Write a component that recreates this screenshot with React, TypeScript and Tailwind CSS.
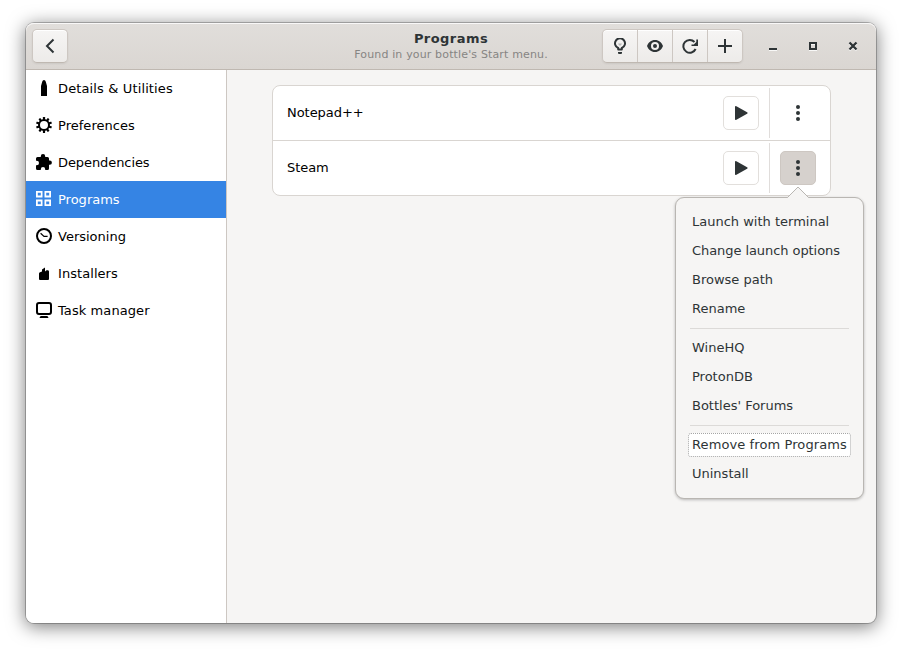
import type { ReactNode } from 'react';

function Icon({ children, className = '' }: { children: ReactNode; className?: string }) {
  return (
    <svg width="16" height="16" viewBox="0 0 16 16" fill="currentColor" className={`block shrink-0 ${className}`}>
      {children}
    </svg>
  );
}

const GEAR_ANGLES = [0, 36, 72, 108, 144, 180, 216, 252, 288, 324];

const NAV: { label: string; icon: ReactNode; tracking: string; active?: boolean }[] = [
  {
    label: 'Details & Utilities',
    tracking: 'tracking-[0.13px]',
    icon: <path d="M5 16V6l1.200-4.200Q6.600 0 8 0t1.800 1.800L11 6v10z" />,
  },
  {
    label: 'Preferences',
    tracking: 'tracking-[0.03px]',
    icon: (
      <>
        <circle cx="8" cy="8" r="5" fill="none" stroke="currentColor" strokeWidth="2" />
        {GEAR_ANGLES.map((a) => (
          <rect key={a} x="6.900" y="0" width="2.200" height="3" rx=".5" transform={`rotate(${a} 8 8)`} />
        ))}
      </>
    ),
  },
  {
    label: 'Dependencies',
    tracking: 'tracking-[-0.08px]',
    icon: (
      <path d="M4.800 3V2.200a2.200 2.200 0 0 1 4.400 0V3h2.300A1.500 1.500 0 0 1 13 4.500V6.600h.8a2.100 2.100 0 0 1 0 4.200H13v3.700a1.500 1.500 0 0 1-1.500 1.500H9.200v-.8a2.200 2.200 0 0 0-4.400 0v.8H1.500A1.500 1.500 0 0 1 0 14.500V11.200h.8a2.200 2.200 0 0 0 0-4.400H0V4.500A1.500 1.500 0 0 1 1.500 3z" />
    ),
  },
  {
    label: 'Programs',
    active: true,
    tracking: 'tracking-normal',
    icon: (
      <path
        fillRule="evenodd"
        d="M0 0h6.500v6.400H0zM1.800 1.800v2.800h3V1.800zM8.500 0H15v6.400H8.500zM10.200 1.800v2.800h3V1.800zM0 8.600h6.500V15H0zM1.800 10.400v2.800h3v-2.800zM8.500 8.600H15V15H8.500zM10.200 10.400v2.800h3v-2.800z"
      />
    ),
  },
  {
    label: 'Versioning',
    tracking: 'tracking-normal',
    icon: (
      <>
        <circle cx="8" cy="8" r="7" fill="none" stroke="currentColor" strokeWidth="2" />
        <path d="M4.600 5.200 8 8.400h3.600" fill="none" stroke="currentColor" strokeWidth="1.200" />
      </>
    ),
  },
  {
    label: 'Installers',
    tracking: 'tracking-[0.06px]',
    icon: <path d="M3 8.500Q3 7.500 4 7.300L6 6.500V4.500L9 2.500V6.500L10.500 5.300H12Q13 5.500 13 6.500V14q0 1-1 1H4q-1 0-1-1z" />,
  },
  {
    label: 'Task manager',
    tracking: 'tracking-[0.08px]',
    icon: (
      <>
        <rect x="1" y="1" width="14" height="11" rx="2" fill="none" stroke="currentColor" strokeWidth="2" />
        <path d="M5 14h6q1 0 1.500 2h-9Q4 14 5 14z" />
      </>
    ),
  },
];

const TOOLS: { name: string; icon: ReactNode }[] = [
  {
    name: 'Tips',
    icon: (
      <>
        <path
          d="M6.200 11.500V10A5 5 0 1 1 9.800 10V11.500z"
          fill="none"
          stroke="currentColor"
          strokeWidth="2"
          strokeLinejoin="round"
        />
        <path d="M6 5.500h4L8.800 7.500H7.200z" opacity=".3" />
        <path d="M6 14h4v1.200Q9.800 16 9 16H7q-.8 0-1-.8z" />
      </>
    ),
  },
  {
    name: 'Show hidden',
    icon: (
      <path
        fillRule="evenodd"
        d="M8 2c4 0 6.600 2.500 8 6-1.400 3.500-4 6-8 6s-6.600-2.500-8-6c1.400-3.500 4-6 8-6zm0 2a4 4 0 1 0 0 8 4 4 0 0 0 0-8zm0 2a2 2 0 1 1 0 4 2 2 0 0 1 0-4z"
      />
    ),
  },
  {
    name: 'Reload',
    icon: (
      <>
        <path d="M12.500 4A6.400 6.400 0 1 0 13.600 11" fill="none" stroke="currentColor" strokeWidth="2" />
        <path d="M16 1.500V8H9.500V6.500h2.300L14.300 4V1.500z" />
      </>
    ),
  },
  { name: 'Add', icon: <path d="M7 1h2v6h6v2H9v6H7V9H1V7h6z" /> },
];

function Dots() {
  return (
    <Icon>
      <circle cx="8" cy="2" r="2" />
      <circle cx="8" cy="8" r="2" />
      <circle cx="8" cy="14" r="2" />
    </Icon>
  );
}

function ProgramRow({ name, open, menu }: { name: string; open?: boolean; menu?: ReactNode }) {
  return (
    <div className="flex h-[54px] items-center">
      <span className="flex-1 pl-3.5 tracking-[-0.05px] text-black">{name}</span>
      <button className="flex h-[34px] w-9 items-center justify-center rounded-[5px] border border-[#e2dfdc] bg-white">
        <Icon>
          <path d="M2 2Q2 .5 3.400 1.200L14.100 7.200q1.300.8 0 1.600L3.400 14.800Q2 15.500 2 14z" />
        </Icon>
      </button>
      <div className="ml-2.5 h-[50px] w-px bg-[#e0dddb]" />
      <div className="relative mr-3.5 ml-2.5">
        <button
          className={`flex h-[34px] w-9 items-center justify-center rounded-[5px] ${open ? 'border border-[#cdc7c2] bg-[#d6d1cd]' : ''}`}
        >
          <Dots />
        </button>
        {menu}
      </div>
    </div>
  );
}

const MENU: string[][] = [
  ['Launch with terminal', 'Change launch options', 'Browse path', 'Rename'],
  ['WineHQ', 'ProtonDB', "Bottles' Forums"],
  ['Remove from Programs', 'Uninstall'],
];

function Popover() {
  return (
    <div className="absolute top-[46px] left-[-105px] z-10 h-[302px] w-[189px] rounded-[9px] border border-[#b9b6b2] bg-[#f6f5f4] px-3 pt-[9px] shadow-[0_1px_3px_rgba(0,0,0,0.25)]">
      <svg width="24" height="12" viewBox="0 0 24 12" className="absolute -top-[12px] left-[110px]">
        <path d="M1 12 12 1 23 12z" fill="#f6f5f4" />
        <path d="M0 11.500H1.500L12 1 22.500 11.500H24" fill="none" stroke="#b9b6b2" />
      </svg>
      {MENU.map((group, i) => (
        <div key={i}>
          {i > 0 && <div className="mx-0.5 my-[5px] -mb-1 h-px bg-[#dcdad8]" />}
          <div className={i > 0 ? 'pt-2' : ''}>
            {group.map((item) => (
              <div key={item} className="flex h-[29px] items-center">
                <div
                  className={`flex h-6 w-[163px] items-center rounded-[3px] border pl-[3px] whitespace-nowrap ${
                    item === 'Remove from Programs'
                      ? 'border-dotted border-[#a5a5a5] bg-white tracking-[0.1px]'
                      : item === 'Change launch options'
                        ? 'border-transparent tracking-[-0.07px]'
                        : 'border-transparent'
                  }`}
                >
                  {item}
                </div>
              </div>
            ))}
          </div>
        </div>
      ))}
    </div>
  );
}

const RAISED =
  'border border-[#cdc7c2] border-b-[#bfb8b1] bg-linear-to-t from-[#edebe9] to-[#f6f5f4] shadow-[inset_0_1px_#fff,0_1px_2px_rgba(0,0,0,0.07)]';

export default function App() {
  return (
    <div className="h-[652px] w-[902px] overflow-hidden bg-white pt-[23px] pl-[26px] font-['DejaVu_Sans',sans-serif] text-[13px] leading-4 text-[#2e3436]">
      <div className="flex h-[600px] w-[850px] flex-col rounded-[8px] bg-[#f6f5f4] shadow-[0_0_0_1px_rgba(0,0,0,0.23),0_3px_18px_1px_rgba(0,0,0,0.5)]">
        <header className="grid h-[47px] shrink-0 grid-cols-[1fr_auto_1fr] rounded-t-[8px] border-b border-[#bfb8b1] bg-linear-to-t from-[#dad6d2] to-[#e1dedb] px-1.5 pt-1.5 shadow-[inset_0_1px_#f9f8f8]">
          <button className={`flex h-[34px] w-9 items-center justify-center rounded-[5px] ${RAISED}`}>
            <Icon>
              <path d="M11.500 1.500 5 8l6.500 6.500" fill="none" stroke="currentColor" strokeWidth="2" />
            </Icon>
          </button>
          <div className="pt-0.5 text-center">
            <h1 className="text-[13px] leading-4 font-bold tracking-[0.45px]">Programs</h1>
            <p className="text-[11px] leading-4 tracking-[0.15px] text-[#868583]">Found in your bottle's Start menu.</p>
          </div>
          <div className="flex items-start justify-end">
            <div className={`flex h-[34px] w-[141px] divide-x divide-[#cdc7c2] rounded-[5px] ${RAISED}`}>
              {TOOLS.map((t) => (
                <button key={t.name} aria-label={t.name} className="flex flex-1 items-center justify-center">
                  <Icon>{t.icon}</Icon>
                </button>
              ))}
            </div>
            <div className="mt-[9px] mr-[9px] ml-[22px] flex gap-6 drop-shadow-[0_1px_0_rgba(255,255,255,0.8)]">
              <Icon>
                <path d="M4 10h8v2H4z" />
              </Icon>
              <Icon>
                <path fillRule="evenodd" d="M4 4h8v8H4zM6 6v4h4V6z" />
              </Icon>
              <Icon>
                <path d="m4.500 4.500 7 7m0-7-7 7" stroke="currentColor" strokeWidth="2.300" />
              </Icon>
            </div>
          </div>
        </header>
        <div className="flex min-h-0 flex-1">
          <nav className="w-[201px] shrink-0 rounded-bl-[8px] border-r border-[#cdc7c2] bg-white text-black">
            {NAV.map((n) => (
              <div
                key={n.label}
                className={`flex h-[37px] items-start gap-1.5 px-2.5 pt-2.5 ${n.active ? 'bg-[#3584e4] text-white' : ''}`}
              >
                <Icon>{n.icon}</Icon>
                <span className={`pt-px ${n.tracking}`}>{n.label}</span>
              </div>
            ))}
          </nav>
          <main className="flex-1 pt-[15px] pl-[45px]">
            <div className="w-[559px] divide-y divide-[#d9d5d1] rounded-[8px] border border-[#d9d5d1] bg-white">
              <div>
                <ProgramRow name="Notepad++" />
              </div>
              <div>
                <ProgramRow name="Steam" open menu={<Popover />} />
              </div>
            </div>
          </main>
        </div>
      </div>
    </div>
  );
}
